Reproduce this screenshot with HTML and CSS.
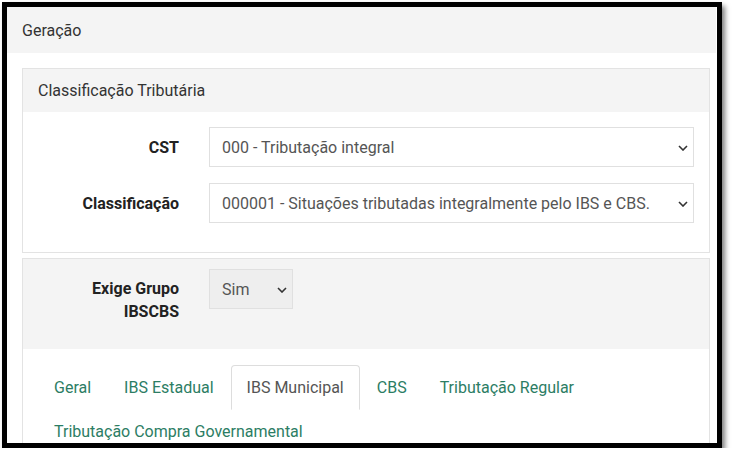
FILE: index.html
```html
<!DOCTYPE html>
<html lang="pt-BR">
<head>
  <meta charset="UTF-8">
  <title>Geração</title>
  <link rel="stylesheet" href="styles.css">
</head>
<body>
  <div class="frame">
    <div class="outer-head">Geração</div>
    <div class="outer-body">

      <!-- Classificação -->
      <div class="panel">
        <div class="panel-head">Classificação Tributária</div>
        <div class="panel-body form-grid">
          <label class="form-label">CST</label>
          <div class="select">
            <span>000 - Tributação integral</span>
            <svg width="10" height="6" viewBox="0 0 10 6"><path d="M1 1l4 4 4-4" fill="none" stroke="#333" stroke-width="1.6"/></svg>
          </div>
          <label class="form-label">Classificação</label>
          <div class="select">
            <span>000001 - Situações tributadas integralmente pelo IBS e CBS.</span>
            <svg width="10" height="6" viewBox="0 0 10 6"><path d="M1 1l4 4 4-4" fill="none" stroke="#333" stroke-width="1.6"/></svg>
          </div>
        </div>
      </div>

      <!-- Grupo IBSCBS -->
      <div class="panel panel-second">
        <div class="panel-head group-head form-grid">
          <label class="form-label two-line">Exige Grupo IBSCBS</label>
          <div class="select select-small">
            <span>Sim</span>
            <svg width="10" height="6" viewBox="0 0 10 6"><path d="M1 1l4 4 4-4" fill="none" stroke="#333" stroke-width="1.6"/></svg>
          </div>
        </div>
        <div class="panel-body tabs-body">
          <ul class="tabs">
            <li><a href="#">Geral</a></li>
            <li><a href="#">IBS Estadual</a></li>
            <li class="active"><a href="#">IBS Municipal</a></li>
            <li><a href="#">CBS</a></li>
            <li><a href="#">Tributação Regular</a></li>
            <li><a href="#">Tributação Compra Governamental</a></li>
          </ul>
        </div>
      </div>

    </div>
  </div>
</body>
</html>
```

FILE: styles.css
```css
body {
  margin: 0;
  background-color: #fff;
  font-family: Roboto, "Liberation Sans", sans-serif;
  font-size: 16px;
  color: #333;
}
.frame {
  margin: 2px 0 0 2px;
  width: 710px;
  height: 436px;
  border: 5px solid #000;
  box-shadow: 3px 4px 5px rgba(0, 0, 0, 0.5);
  overflow: hidden;
  background-color: #fff;
}
.outer-head {
  background-color: #f4f4f4;
  padding: 13px 15px 11px;
  line-height: 22px;
  margin-right: 1px;
}
.outer-body {
  padding: 15px 7px 0 15px;
}
.panel {
  border: 1px solid #e3e3e3;
  background-color: #fff;
}
.panel-second {
  margin-top: 5px;
}
.panel-head {
  background-color: #f4f4f4;
  padding: 10px 15px;
  line-height: 23px;
}
.panel-body {
  padding: 15px 15px 29px;
}
.form-grid {
  display: grid;
  grid-template-columns: 141px 1fr;
  column-gap: 30px;
  row-gap: 16px;
  align-items: start;
}
.form-label {
  font-weight: bold;
  text-align: right;
  padding-top: 10px;
  line-height: 22px;
  color: #222;
}
.form-label.two-line {
  padding-top: 8px;
  line-height: 23px;
  padding-left: 40px;
}
.select {
  display: flex;
  align-items: center;
  justify-content: space-between;
  height: 37px;
  border: 1px solid #e0e0e0;
  padding: 1px 5px 0 12px;
  line-height: 37px;
  color: #555;
  background-color: #fff;
}
.select-small {
  width: 65px;
  background-color: #eeeeee;
}
.group-head {
  padding: 10px 15px 26px;
}
.tabs-body {
  padding: 16px 15px 0 15px;
}
.tabs {
  list-style: none;
  margin: 0;
  padding: 0;
  display: flex;
  flex-wrap: wrap;
  border-bottom: 1px solid #ddd;
}
.tabs li {
  margin-right: 1px;
  margin-bottom: -1px;
}
.tabs a {
  display: block;
  padding: 11px 15px 10px;
  line-height: 22px;
  color: #2c7d64;
  text-decoration: none;
  border: 1px solid transparent;
  border-radius: 4px 4px 0 0;
}
.tabs li.active a {
  color: #555;
  border-color: #ddd;
  border-bottom-color: transparent;
  background-color: #fff;
}
```
